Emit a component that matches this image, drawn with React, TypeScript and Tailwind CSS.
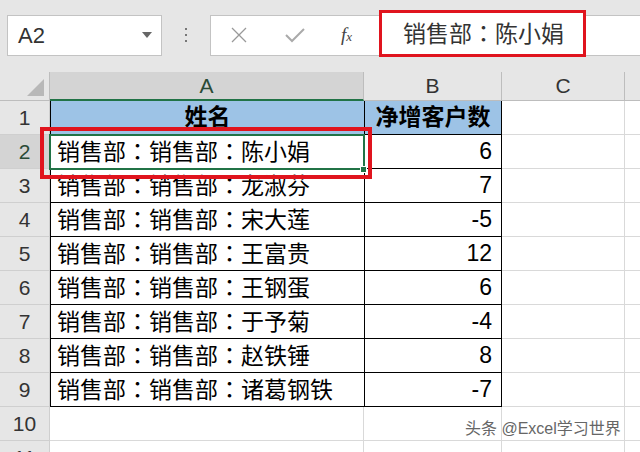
const rows = [
  { n: 2, name: "销售部：销售部：陈小娟", v: "6" },
  { n: 3, name: "销售部：销售部：龙淑芬", v: "7" },
  { n: 4, name: "销售部：销售部：宋大莲", v: "-5" },
  { n: 5, name: "销售部：销售部：王富贵", v: "12" },
  { n: 6, name: "销售部：销售部：王钢蛋", v: "6" },
  { n: 7, name: "销售部：销售部：于予菊", v: "-4" },
  { n: 8, name: "销售部：销售部：赵铁锤", v: "8" },
  { n: 9, name: "销售部：销售部：诸葛钢铁", v: "-7" },
];

const font = { fontFamily: '"Liberation Sans", "Noto Sans CJK SC", sans-serif' };
const jp = { fontFamily: '"Noto Sans CJK JP", sans-serif' };

// full-width colon sits centered in the reference, so it gets the JP face
function Cjk({ text }: { text: string }) {
  const parts = text.split("：");
  return (
    <span className="leading-none">
      {parts.map((p, i) => (
        <span key={i}>
          {p}
          {i < parts.length - 1 && <span style={jp}>：</span>}
        </span>
      ))}
    </span>
  );
}

export default function App() {
  return (
    <div className="relative h-[452px] w-[640px] overflow-hidden bg-white" style={font}>
      {/* formula bar area */}
      <div className="flex h-[72px] items-center bg-[#e6e6e6] pb-[2px] pl-[7px]">
        <div className="flex h-[41px] w-[155px] items-center justify-between border border-[#c3c3c3] bg-white pl-[10px] pr-[9px]">
          <span className="text-[22px] text-[#333]">A2</span>
          <svg width="10" height="6" viewBox="0 0 10 6">
            <path d="M0 0 L10 0 L5 6 Z" fill="#666" />
          </svg>
        </div>
        <div className="flex w-[48px] flex-col items-center gap-[4px]">
          <span className="h-[2px] w-[2px] bg-[#777]" />
          <span className="h-[2px] w-[2px] bg-[#777]" />
          <span className="h-[2px] w-[2px] bg-[#777]" />
        </div>
        <div className="flex h-[41px] flex-1 items-center border border-r-0 border-[#c3c3c3] bg-white">
          <svg className="ml-[20px]" width="16" height="16" viewBox="0 0 16 16">
            <path d="M1 1 L15 15 M15 1 L1 15" stroke="#999" strokeWidth="1.3" />
          </svg>
          <svg className="ml-[38px]" width="20" height="16" viewBox="0 0 20 16">
            <path d="M1 8 L7 14 L19 2" stroke="#aaa" strokeWidth="2" fill="none" />
          </svg>
          <span className="ml-[36px] text-[19px] italic text-[#444]" style={{ fontFamily: '"Liberation Serif", serif' }}>
            f<span className="text-[13px]">x</span>
          </span>
        </div>
      </div>

      {/* red box around formula content */}
      <div className="absolute left-[379px] top-[10px] flex h-[47px] w-[207px] items-center whitespace-nowrap border-[3px] border-[#e0141e] bg-white pl-[21px] text-[23px] leading-none text-[#333]">
        <Cjk text="销售部：陈小娟" />
      </div>

      {/* grid */}
      <div className="grid grid-cols-[50px_314px_138px_123px_1fr]">
        {/* column headers */}
        <div className="relative h-[29px] border-b border-r border-[#bdbdbd] bg-[#e6e6e6]">
          <svg className="absolute bottom-[4px] right-[5px]" width="17" height="17" viewBox="0 0 17 17">
            <path d="M17 0 L17 17 L0 17 Z" fill="#b8b8b8" />
          </svg>
        </div>
        <div className="flex h-[29px] items-center justify-center border-b-2 border-r border-b-[#217346] border-r-[#bdbdbd] bg-[#d4d4d4] text-[21px] text-[#2a4a36]">A</div>
        <div className="flex h-[29px] items-center justify-center border-b border-r border-[#bdbdbd] bg-[#e6e6e6] text-[21px] text-[#333]">B</div>
        <div className="flex h-[29px] items-center justify-center border-b border-r border-[#bdbdbd] bg-[#e6e6e6] text-[21px] text-[#333]">C</div>
        <div className="h-[29px] border-b border-[#bdbdbd] bg-[#e6e6e6]" />

        {/* row 1 */}
        <div className="flex h-[34px] items-center justify-center border-b border-r border-[#cfcfcf] bg-[#e6e6e6] text-[21px] text-[#333]">1</div>
        <div className="flex h-[34px] items-center justify-center border-b border-l border-black bg-[#9dc3e6] text-[23px] font-bold leading-none text-black">姓名</div>
        <div className="flex h-[34px] items-center justify-center whitespace-nowrap border-b border-l border-r border-black bg-[#9dc3e6] text-[23px] font-bold leading-none text-black">净增客户数</div>
        <div className="h-[34px] border-b border-r border-[#d9d9d9]" />
        <div className="h-[34px] border-b border-[#d9d9d9]" />

        {rows.map((r) => (
          <Row key={r.n} {...r} />
        ))}

        {[10, 11].map((n) => (
          <EmptyRow key={n} n={n} />
        ))}
      </div>

      {/* selection of A2 */}
      <div className="absolute left-[49px] top-[134px] h-[36px] w-[316px] border-2 border-[#217346]" />
      <div className="absolute left-[360px] top-[166px] h-[7px] w-[7px] border border-white bg-[#217346]" />
      {/* red highlight box */}
      <div className="absolute left-[40px] top-[127px] h-[52px] w-[332px] border-[4px] border-[#e0141e]" />

      {/* watermark */}
      <div
        className="absolute left-[465px] top-[421px] whitespace-nowrap text-[16px] leading-none text-[#666]"
        style={{ textShadow: "0 0 2px #fff, 0 0 2px #fff" }}
      >
        头条 @Excel学习世界
      </div>
    </div>
  );
}

function Row({ n, name, v }: { n: number; name: string; v: string }) {
  return (
    <>
      <div
        className={
          n === 2
            ? "flex h-[34px] items-center justify-center border-b border-r border-[#cfcfcf] bg-[#d4d4d4] text-[21px] text-[#2a4a36]"
            : "flex h-[34px] items-center justify-center border-b border-r border-[#cfcfcf] bg-[#e6e6e6] text-[21px] text-[#333]"
        }
      >
        {n}
      </div>
      <div className="flex h-[34px] items-center whitespace-nowrap border-b border-l border-black pl-[6px] text-[23px] leading-none text-black">
        <Cjk text={name} />
      </div>
      <div className="flex h-[34px] items-center justify-end border-b border-l border-r border-black pr-[9px] text-[23px] text-black">
        {v}
      </div>
      <div className="h-[34px] border-b border-r border-[#d9d9d9]" />
      <div className="h-[34px] border-b border-[#d9d9d9]" />
    </>
  );
}

function EmptyRow({ n }: { n: number }) {
  return (
    <>
      <div className="flex h-[34px] items-center justify-center border-b border-r border-[#cfcfcf] bg-[#e6e6e6] text-[21px] text-[#333]">
        {n}
      </div>
      <div className="h-[34px] border-b border-r border-[#d9d9d9]" />
      <div className="h-[34px] border-b border-r border-[#d9d9d9]" />
      <div className="h-[34px] border-b border-r border-[#d9d9d9]" />
      <div className="h-[34px] border-b border-[#d9d9d9]" />
    </>
  );
}
